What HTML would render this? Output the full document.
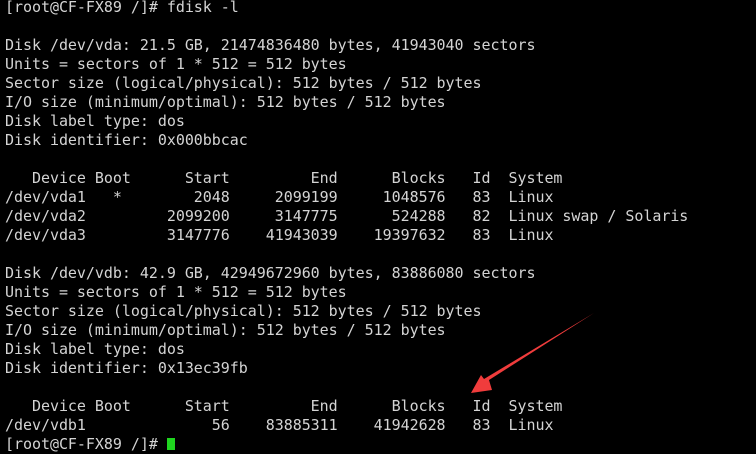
<!DOCTYPE html>
<html><head><style>
html,body{margin:0;padding:0;background:#000;width:756px;height:439px;overflow:hidden}
pre{margin:0;position:absolute;left:5px;top:-2px;font-family:"DejaVu Sans Mono","Liberation Mono",monospace;font-size:15px;line-height:19px;letter-spacing:-0.04px;color:#d4d4d4}
.c{display:inline-block;width:8px;height:12px;background:#1fd51f;vertical-align:-1px}
svg{position:absolute;left:0;top:0}
</style></head><body>
<pre>[root@CF-FX89 /]# fdisk -l

Disk /dev/vda: 21.5 GB, 21474836480 bytes, 41943040 sectors
Units = sectors of 1 * 512 = 512 bytes
Sector size (logical/physical): 512 bytes / 512 bytes
I/O size (minimum/optimal): 512 bytes / 512 bytes
Disk label type: dos
Disk identifier: 0x000bbcac

   Device Boot      Start         End      Blocks   Id  System
/dev/vda1   *        2048     2099199     1048576   83  Linux
/dev/vda2         2099200     3147775      524288   82  Linux swap / Solaris
/dev/vda3         3147776    41943039    19397632   83  Linux

Disk /dev/vdb: 42.9 GB, 42949672960 bytes, 83886080 sectors
Units = sectors of 1 * 512 = 512 bytes
Sector size (logical/physical): 512 bytes / 512 bytes
I/O size (minimum/optimal): 512 bytes / 512 bytes
Disk label type: dos
Disk identifier: 0x13ec39fb

   Device Boot      Start         End      Blocks   Id  System
/dev/vdb1              56    83885311    41942628   83  Linux
[root@CF-FX89 /]# <span class="c"></span></pre>
<svg width="756" height="439"><polygon points="594,313 489,380 492,390 471,393 481,375 484,379" fill="#f03c3c"/></svg>
</body></html>
